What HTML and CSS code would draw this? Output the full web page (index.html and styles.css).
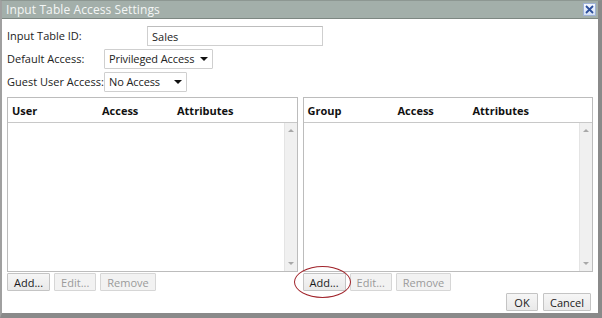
FILE: index.html
```html
<!DOCTYPE html>
<html lang="en">
  <head>
    <meta charset="UTF-8" />
    <title>Input Table Access Settings</title>
    <link rel="stylesheet" href="styles.css">
  </head>
  <body>
    <div class="dialog">
      <div class="dialog-title">
        <span class="title-text">Input Table Access Settings</span>
        <span class="close-btn">
          <svg width="11" height="11" viewBox="0 0 11 11">
            <path d="M2 2 L9 9 M9 2 L2 9" stroke="#2c4f9c" stroke-width="1.8" />
          </svg>
        </span>
      </div>

      <div class="dialog-body">
        <div class="form-row">
          <label class="form-label">Input Table ID:</label>
          <div class="text-input id-input">Sales</div>
        </div>
        <div class="form-row">
          <label class="form-label">Default Access:</label>
          <div class="select-box default-select">
            <span>Privileged Access</span>
            <span class="caret"></span>
          </div>
        </div>
        <div class="form-row">
          <label class="form-label">Guest User Access:</label>
          <div class="select-box guest-select">
            <span>No Access</span>
            <span class="caret"></span>
          </div>
        </div>

        <div class="panels">
          <div class="panel-column">
            <div class="panel">
              <div class="panel-header">
                <span class="col-name">User</span>
                <span class="col-access">Access</span>
                <span class="col-attr">Attributes</span>
              </div>
              <div class="panel-body">
                <div class="panel-list"></div>
                <div class="scrollbar">
                  <span class="arrow up"></span>
                  <span class="arrow down"></span>
                </div>
              </div>
            </div>
            <div class="button-row">
              <button class="btn">Add...</button>
              <button class="btn" disabled>Edit...</button>
              <button class="btn" disabled>Remove</button>
            </div>
          </div>

          <div class="panel-column">
            <div class="panel">
              <div class="panel-header">
                <span class="col-name">Group</span>
                <span class="col-access">Access</span>
                <span class="col-attr">Attributes</span>
              </div>
              <div class="panel-body">
                <div class="panel-list"></div>
                <div class="scrollbar">
                  <span class="arrow up"></span>
                  <span class="arrow down"></span>
                </div>
              </div>
            </div>
            <div class="button-row">
              <button class="btn highlighted">Add...</button>
              <button class="btn" disabled>Edit...</button>
              <button class="btn" disabled>Remove</button>
            </div>
          </div>
        </div>

        <div class="dialog-footer">
          <button class="btn ok-btn">OK</button>
          <button class="btn">Cancel</button>
        </div>
      </div>
    </div>
  </body>
</html>
```

FILE: styles.css
```css
* {
  margin: 0;
  padding: 0;
  box-sizing: border-box;
}

body,
html {
  width: 100%;
  height: 100%;
  overflow: hidden;
  background: #ffffff;
  font-family: "Open Sans", Arial, sans-serif;
  font-size: 11px;
  color: #222;
}

.dialog {
  width: 602px;
  height: 318px;
  display: flex;
  flex-direction: column;
  background: #ffffff;
  border-top: 1px solid #8d9792;
  border-left: 2px solid #a0a0a0;
  border-right: 4px solid #8a8a8a;
  border-bottom: 5px solid #8a8a8a;
}

.dialog-title {
  height: 18px;
  display: flex;
  align-items: center;
  justify-content: space-between;
  padding: 0 2px 0 4px;
  background: #a3afaa;
  border-bottom: 1px solid #7d8782;
}

.title-text {
  color: #f4f6f5;
  font-family: "Open Sans", sans-serif;
  font-size: 12px;
  letter-spacing: 0.1px;
}

.close-btn {
  width: 13px;
  height: 13px;
  display: flex;
  align-items: center;
  justify-content: center;
  background: linear-gradient(#f4f8ff, #d4e0f6);
  border: 1px solid #9fb2d6;
}

.dialog-body {
  flex: 1;
  display: flex;
  flex-direction: column;
  padding: 5px 5px 0 5px;
}

.form-row {
  height: 23px;
  display: flex;
  align-items: center;
}

.form-label {
  width: 97px;
  white-space: nowrap;
}

.text-input {
  height: 20px;
  width: 176px;
  margin-left: 43px;
  padding: 2px 4px;
  border: 1px solid #cfcfcf;
  border-top-color: #bdbdbd;
}

.select-box {
  height: 20px;
  display: flex;
  align-items: center;
  justify-content: space-between;
  padding: 0 4px 0 4px;
  border: 1px solid #cfcfcf;
  border-radius: 1px;
  letter-spacing: -0.1px;
}

.default-select {
  width: 109px;
}

.guest-select {
  width: 83px;
}

.caret {
  width: 0;
  height: 0;
  border-left: 4px solid transparent;
  border-right: 4px solid transparent;
  border-top: 4px solid #111;
}

.panels {
  display: flex;
  gap: 5px;
  margin-top: 4px;
}

.panel-column {
  width: 291px;
  display: flex;
  flex-direction: column;
}

.panel {
  height: 175px;
  display: flex;
  flex-direction: column;
  border: 1px solid #bcbcbc;
}

.panel-header {
  height: 25px;
  display: flex;
  align-items: center;
  padding-left: 4px;
  border-bottom: 1px solid #c8c8c8;
  font-weight: bold;
  color: #111;
}

.col-name {
  width: 90px;
}

.col-access {
  width: 75px;
}

.panel-body {
  flex: 1;
  display: flex;
}

.panel-list {
  flex: 1;
}

.scrollbar {
  width: 13px;
  display: flex;
  flex-direction: column;
  justify-content: space-between;
  align-items: center;
  padding: 6px 0;
  background: #f0f0f0;
  border-left: 1px solid #e4e4e4;
}

.arrow {
  width: 0;
  height: 0;
  border-left: 3px solid transparent;
  border-right: 3px solid transparent;
}

.arrow.up {
  border-bottom: 3px solid #a8a8a8;
}

.arrow.down {
  border-top: 3px solid #a8a8a8;
}

.button-row {
  display: flex;
  gap: 4px;
  margin-top: 1px;
}

.btn {
  height: 18px;
  padding: 0 6px;
  font-family: "Open Sans", Arial, sans-serif;
  font-size: 11px;
  color: #1a1a1a;
  background: linear-gradient(#f6f6f6, #e9e9e9);
  border: 1px solid #c4c4c4;
  border-radius: 1px;
}

.btn:disabled {
  color: #9a9a9a;
  background: #f2f2f2;
  border-color: #d6d6d6;
}

.highlighted {
  position: relative;
}

.highlighted::after {
  content: "";
  position: absolute;
  left: -10px;
  top: -8px;
  width: 55px;
  height: 30px;
  border: 1.5px solid #a0232a;
  border-radius: 50%;
}

.dialog-footer {
  display: flex;
  justify-content: flex-end;
  gap: 5px;
  margin-top: 2px;
  padding-right: 2px;
}

.ok-btn {
  width: 32px;
}
```
